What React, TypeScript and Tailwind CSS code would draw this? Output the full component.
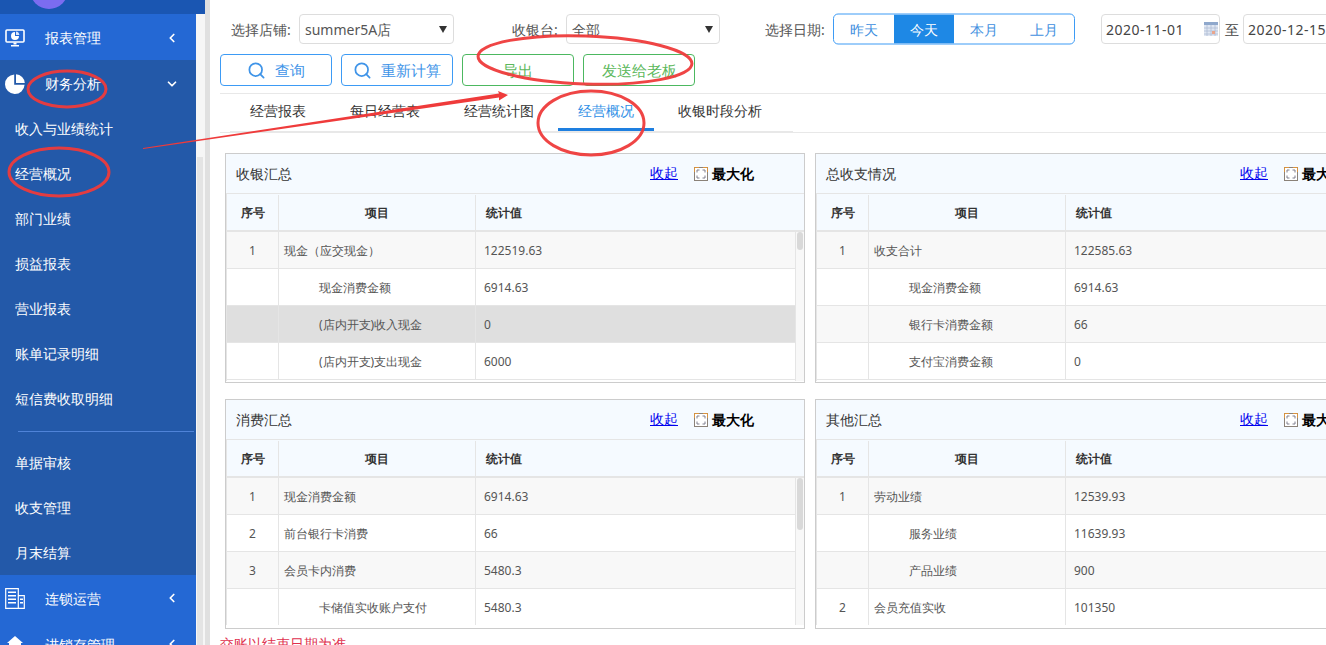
import { ChevronLeft, ChevronDown, Search } from "lucide-react";

type Row = { n: string; name: string; val: string; indent?: boolean; bg?: string };

const cash: Row[] = [
  { n: "1", name: "现金（应交现金）", val: "122519.63", bg: "bg-[#f8f8f8]" },
  { n: "", name: "现金消费金额", val: "6914.63", indent: true },
  { n: "", name: "(店内开支)收入现金", val: "0", indent: true, bg: "bg-[#dfdfdf]" },
  { n: "", name: "(店内开支)支出现金", val: "6000", indent: true },
];
const total: Row[] = [
  { n: "1", name: "收支合计", val: "122585.63", bg: "bg-[#f8f8f8]" },
  { n: "", name: "现金消费金额", val: "6914.63", indent: true },
  { n: "", name: "银行卡消费金额", val: "66", indent: true, bg: "bg-[#f8f8f8]" },
  { n: "", name: "支付宝消费金额", val: "0", indent: true },
];
const spend: Row[] = [
  { n: "1", name: "现金消费金额", val: "6914.63", bg: "bg-[#f8f8f8]" },
  { n: "2", name: "前台银行卡消费", val: "66" },
  { n: "3", name: "会员卡内消费", val: "5480.3", bg: "bg-[#f8f8f8]" },
  { n: "", name: "卡储值实收账户支付", val: "5480.3", indent: true },
];
const other: Row[] = [
  { n: "1", name: "劳动业绩", val: "12539.93", bg: "bg-[#f8f8f8]" },
  { n: "", name: "服务业绩", val: "11639.93", indent: true },
  { n: "", name: "产品业绩", val: "900", indent: true, bg: "bg-[#f8f8f8]" },
  { n: "2", name: "会员充值实收", val: "101350" },
];

function MaxIcon() {
  return (
    <svg width="14" height="14" viewBox="0 0 14 14" className="shrink-0">
      <rect x="0.5" y="0.5" width="13" height="13" fill="#fff" stroke="#8a8178" />
      <path d="M0.5 5V0.5H5M9 0.5H13.5V5" fill="none" stroke="#d9933f" />
      <path d="M3 5.5V3H5.5M8.5 3H11V5.5M11 8.5V11H8.5M5.5 11H3V8.5" fill="none" stroke="#7d7d8c" />
    </svg>
  );
}

function Panel({ title, rows, thumb, bodyH }: { title: string; rows: Row[]; thumb: string; bodyH: string }) {
  return (
    <div className="flex h-[230px] flex-col border border-[#cccccc] bg-white">
      <div className="flex h-[40px] shrink-0 items-center border-b border-[#e5e5e5] bg-[#f5faff] pl-[10px]">
        <span className="w-[414px] text-[14px] text-[#333333]">{title}</span>
        <a className="w-[27px] text-[13.5px] whitespace-nowrap text-[#0000ee] underline">收起</a>
        <span className="ml-[17px]"><MaxIcon /></span>
        <span className="ml-[4px] text-[14px] font-bold whitespace-nowrap text-black">最大化</span>
      </div>
      <div className="flex h-[38px] shrink-0 border-b-2 border-l border-[#e5e5e5] bg-[#f5faff] pt-[1px] text-[12px] font-bold text-[#333333]">
        <div className="flex w-[52px] items-center justify-center border-r border-[#e5e5e5]">序号</div>
        <div className="flex w-[197px] items-center justify-center border-r border-[#e5e5e5]">项目</div>
        <div className="flex flex-1 items-center pl-[10px]">统计值</div>
      </div>
      <div className={`flex overflow-hidden border-l border-[#e5e5e5] ${bodyH}`}>
        <div className="flex-1">
          {rows.map((r, i) => (
            <div key={i} className={`flex h-[37px] border-b border-[#e5e5e5] text-[12px] text-[#555555] ${r.bg ?? ""}`}>
              <div className="flex w-[52px] items-center justify-center border-r border-[#e5e5e5] pt-[1px]">{r.n}</div>
              <div className={`flex w-[197px] items-center border-r border-[#e5e5e5] pt-[1px] whitespace-nowrap ${r.indent ? "pl-[40px]" : "pl-[5px]"}`}>{r.name}</div>
              <div className="flex flex-1 items-center pl-[8px] pt-[1px]">{r.val}</div>
            </div>
          ))}
        </div>
        <div className="w-[9px] shrink-0 border-l border-[#e5e5e5] bg-[#f8f8f8] pl-[1px] pr-[1px]">
          <div className={`rounded-[3px] bg-[#d9d9d9] ${thumb}`} />
        </div>
      </div>
    </div>
  );
}

function Caret() {
  return (
    <svg width="8" height="7" viewBox="0 0 8 7" className="shrink-0">
      <path d="M0 0H8L4 7Z" fill="#333333" />
    </svg>
  );
}

function Select({ text, w }: { text: string; w: string }) {
  return (
    <div className={`flex h-[30px] shrink-0 items-center justify-between rounded-[4px] border border-[#dddddd] pl-[5px] pr-[6px] text-[14px] text-[#555555] ${w}`}>
      <span>{text}</span>
      <Caret />
    </div>
  );
}

function Calendar() {
  return (
    <svg width="14" height="14" viewBox="0 0 14 14" className="shrink-0">
      <rect x="0" y="0" width="14" height="14" fill="#dfe6f2" />
      <rect x="0" y="0" width="14" height="3" fill="#8fa8cc" />
      <path d="M0 6H14M0 9H14M0 12H14M3 3V14M7 3V14M11 3V14" stroke="#aebcd4" strokeWidth="0.8" />
      <rect x="8" y="9" width="3" height="3" fill="#e9a58c" />
    </svg>
  );
}

function MenuIcon({ kind }: { kind: string }) {
  if (kind === "monitor")
    return (
      <svg width="20" height="18" viewBox="0 0 20 18">
        <rect x="1" y="1" width="18" height="12" rx="1" fill="none" stroke="#fff" strokeWidth="1.6" />
        <path d="M10 3a4 4 0 1 0 4 4h-4Z" fill="#fff" />
        <path d="M11 2.6a4 4 0 0 1 3.4 3.4H11Z" fill="#dbe6fb" />
        <path d="M8.5 13.5h3v2h-3ZM6 16h8v1.4H6Z" fill="#fff" />
      </svg>
    );
  if (kind === "pie")
    return (
      <svg width="20" height="20" viewBox="0 0 20 20">
        <path d="M9.2 0.4V10.8H19.6A9.8 9.8 0 1 1 9.2 0.4Z" fill="#fff" />
        <path d="M11 0.2A9.2 9.2 0 0 1 19.8 9H11Z" fill="#fff" />
      </svg>
    );
  if (kind === "building")
    return (
      <svg width="20" height="21" viewBox="0 0 20 21">
        <path d="M0.7 0.7H13.3V20.3H0.7ZM13.3 7.7H19.3V20.3H13.3Z" fill="none" stroke="#fff" strokeWidth="1.2" />
        <path d="M3 3.500H11V5H3ZM3 7H11V8.500H3ZM3 10.500H11V12H3ZM3 14H11V15.500H3ZM15 10.500H18V12H15ZM15 14H18V15.500H15Z" fill="#fff" />
      </svg>
    );
  return (
    <svg width="16" height="16" viewBox="0 0 16 16">
      <path d="M8 0L16 7H14V16H2V7H0Z" fill="#fff" />
      <rect x="6.5" y="9" width="3" height="7" fill="#2468d4" />
    </svg>
  );
}

function TopItem({ icon, label, open, cls }: { icon: string; label: string; open?: boolean; cls: string }) {
  return (
    <div className={`flex shrink-0 items-center text-[14px] text-white ${cls}`}>
      <div className="flex w-[45px] justify-center pr-[15px]"><MenuIcon kind={icon} /></div>
      <span className="flex-1 whitespace-nowrap">{label}</span>
      <span className="mr-[17px]">
        {open ? <ChevronDown size={14} strokeWidth={3} color="#fff" /> : <ChevronLeft size={14} strokeWidth={3} color="#fff" />}
      </span>
    </div>
  );
}

function SubItem({ label }: { label: string }) {
  return <div className="flex h-[45px] shrink-0 items-center pl-[15px] text-[14px] whitespace-nowrap text-white">{label}</div>;
}

function Btn({ label, green, icon }: { label: string; green?: boolean; icon?: boolean }) {
  return (
    <button className={`flex h-[32px] w-[112px] items-center justify-center gap-[9px] rounded-[4px] border bg-white text-[15px] ${green ? "border-[#4cb860] text-[#5cb85c]" : "border-[#3d9bf5] text-[#3f94e8]"}`}>
      {icon && <Search size={19} strokeWidth={2.2} color="#3f94e8" />}
      <span className="whitespace-nowrap">{label}</span>
    </button>
  );
}

export default function App() {
  return (
    <div className="relative flex h-[645px] w-[1326px] overflow-hidden bg-white font-['Noto_Sans','Noto_Sans_CJK_SC',sans-serif]">
      <aside className="flex w-[205px] shrink-0 flex-col">
        <div className="h-[14px] shrink-0 overflow-hidden bg-[#1a56b2] pl-[30px]">
          <div className="-mt-[29px] h-[38px] w-[38px] rounded-full bg-[#7b6cf0]" />
        </div>
        <div className="flex min-h-0 flex-1">
          <nav className="flex w-[196px] shrink-0 flex-col overflow-hidden bg-[#2359a9]">
            <TopItem icon="monitor" label="报表管理" cls="h-[46px] bg-[#2468d4] pt-[1px]" />
            <TopItem icon="pie" label="财务分析" open cls="h-[46px] bg-[#2359a9] pt-[1px]" />
            <SubItem label="收入与业绩统计" />
            <SubItem label="经营概况" />
            <SubItem label="部门业绩" />
            <SubItem label="损益报表" />
            <SubItem label="营业报表" />
            <SubItem label="账单记录明细" />
            <SubItem label="短信费收取明细" />
            <div className="ml-[18px] mt-[10px] mb-[8px] h-[1px] w-[176px] shrink-0 bg-[#4f83d8]" />
            <SubItem label="单据审核" />
            <SubItem label="收支管理" />
            <SubItem label="月末结算" />
            <TopItem icon="building" label="连锁运营" cls="h-[46px] bg-[#2468d4]" />
            <TopItem icon="home" label="进销存管理" cls="h-[46px] bg-[#2468d4]" />
          </nav>
          <div className="w-[9px] shrink-0 bg-[#f6f6f6] pl-[1px] pr-[2px] pt-[143px]">
            <div className="h-[500px] bg-[#e4e4e4]" />
          </div>
        </div>
      </aside>
      <div className="w-[5px] shrink-0 bg-[#e0e0e0]" />

      <main className="min-w-0 flex-1 overflow-hidden pl-[10px] text-[#555555]">
        <div className="mt-[14px] flex h-[30px] items-center text-[14px] whitespace-nowrap">
          <span className="ml-[11px] w-[68px] shrink-0">选择店铺:</span>
          <Select text="summer5A店" w="w-[155px]" />
          <span className="ml-[58px] w-[54px] shrink-0">收银台:</span>
          <Select text="全部" w="w-[154px]" />
          <span className="ml-[45px] w-[68px] shrink-0">选择日期:</span>
          <div className="flex h-[31px] w-[242px] shrink-0 -translate-y-[0.5px] overflow-hidden rounded-[5px] border border-[#3d9bf5] text-[#3f8fe0]">
            <span className="flex w-[60px] items-center justify-center">昨天</span>
            <span className="flex w-[60px] items-center justify-center bg-[#1e88e5] text-white">今天</span>
            <span className="flex w-[60px] items-center justify-center">本月</span>
            <span className="flex w-[60px] items-center justify-center">上月</span>
          </div>
          <div className="ml-[26px] flex h-[30px] w-[119px] shrink-0 items-center justify-between rounded-[4px] border border-[#dddddd] pl-[4px] pr-[1px] tracking-[0.5px] text-[#444444]">
            <span>2020-11-01</span>
            <Calendar />
          </div>
          <span className="w-[23px] shrink-0 text-center text-[#444444]">至</span>
          <div className="flex h-[30px] w-[130px] shrink-0 items-center rounded-[4px] border border-[#dddddd] pl-[4px] tracking-[0.5px] text-[#444444]">2020-12-15</div>
        </div>

        <div className="mt-[10px] flex gap-[9px]">
          <Btn label="查询" icon />
          <Btn label="重新计算" icon />
          <Btn label="导出" green />
          <Btn label="发送给老板" green />
        </div>

        <div className="mt-[7px] h-[1px] bg-[#e8e8e8]" />

        <div className="flex h-[39px] items-stretch border-b border-[#e8e8e8]">
          <div className="ml-[10px] flex h-[39px] w-[563px] shrink-0 gap-[4px] border-b-2 border-[#e8e8e8] text-[14px] text-[#333333]">
            <div className="flex h-[37px] items-center px-[20px] pb-[4px] whitespace-nowrap">经营报表</div>
            <div className="flex h-[37px] items-center px-[20px] pb-[4px] whitespace-nowrap">每日经营表</div>
            <div className="flex h-[37px] items-center px-[20px] pb-[4px] whitespace-nowrap">经营统计图</div>
            <div className="flex h-[37px] items-center border-b-[3px] border-[#1e7fe0] px-[20px] pb-[1px] whitespace-nowrap text-[#2f8fe6]">经营概况</div>
            <div className="flex h-[37px] items-center px-[20px] pb-[4px] whitespace-nowrap">收银时段分析</div>
          </div>
        </div>

        <div className="ml-[5px] mt-[20px] grid w-[1170px] grid-cols-[580px_580px] gap-x-[10px] gap-y-[16px]">
          <Panel title="收银汇总" rows={cash} thumb="h-[18px]" bodyH="h-[149px]" />
          <Panel title="总收支情况" rows={total} thumb="h-[18px]" bodyH="h-[149px]" />
          <Panel title="消费汇总" rows={spend} thumb="h-[52px]" bodyH="h-[147px]" />
          <Panel title="其他汇总" rows={other} thumb="h-[52px]" bodyH="h-[147px]" />
        </div>

        <div className="mt-[5px] text-[14px] leading-[20px] text-[#e0304e]">交账以结束日期为准</div>
      </main>

      <svg className="pointer-events-none absolute left-0 top-0" width="1326" height="645" viewBox="0 0 1326 645" fill="none">
        <g stroke="#ef3b3b" strokeWidth="3" opacity="0.95">
          <ellipse cx="67" cy="89" rx="39" ry="18" />
          <ellipse cx="59" cy="172" rx="50" ry="24" />
          <ellipse cx="585" cy="60" rx="107" ry="24" transform="rotate(2 585 60)" />
          <ellipse cx="591" cy="123" rx="53" ry="32" />
        </g>
        <path d="M143 148L499 93.500L498 91L508 95L499 100.500L499 97.500L143 149Z" fill="#ef3b3b" />
      </svg>
    </div>
  );
}
